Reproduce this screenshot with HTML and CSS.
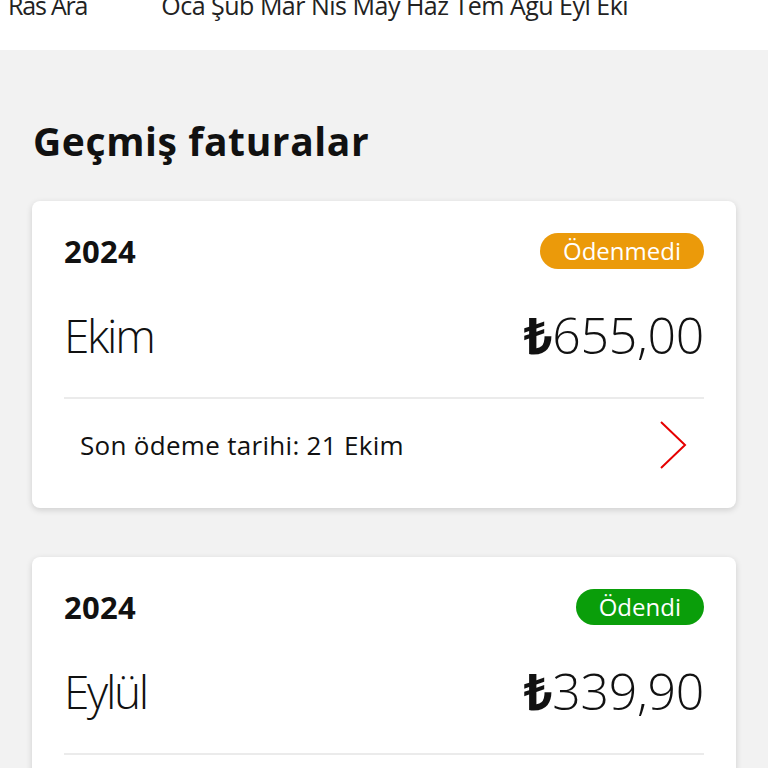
FILE: index.html
```html
<!DOCTYPE html>
<html lang="tr">
<head>
  <meta charset="UTF-8" />
  <meta name="viewport" content="width=device-width, initial-scale=1.0" />
  <title>Geçmiş faturalar</title>
  <link rel="stylesheet" href="styles.css">
</head>
<body>
  <div class="months">
    <span class="prev">Ras Ara</span>
    <span class="cur">Oca Şub Mar Nis May Haz Tem Ağu Eyl Eki</span>
  </div>

  <main class="history">
    <h1>Geçmiş faturalar</h1>

    <div class="bill">
      <div class="bill-top">
        <span class="year">2024</span>
        <span class="badge unpaid">Ödenmedi</span>
      </div>
      <div class="bill-mid">
        <span class="month">Ekim</span>
        <span class="amount"><b>₺</b>655,00</span>
      </div>
      <div class="bill-foot">
        <span>Son ödeme tarihi: 21 Ekim</span>
        <svg class="chev" width="30" height="50" viewBox="0 0 30 50">
          <path d="M3 2 L27 25 L3 48" fill="none" stroke="#e60000" stroke-width="2" />
        </svg>
      </div>
    </div>

    <div class="bill">
      <div class="bill-top">
        <span class="year">2024</span>
        <span class="badge paid">Ödendi</span>
      </div>
      <div class="bill-mid">
        <span class="month">Eylül</span>
        <span class="amount"><b>₺</b>339,90</span>
      </div>
      <div class="bill-foot">
        <span>Son ödeme tarihi: 21 Eylül</span>
        <svg class="chev" width="30" height="50" viewBox="0 0 30 50">
          <path d="M3 2 L27 25 L3 48" fill="none" stroke="#e60000" stroke-width="2" />
        </svg>
      </div>
    </div>
  </main>
</body>
</html>
```

FILE: styles.css
```css
body { margin: 0; font-family: "Open Sans", "Noto Sans", sans-serif; background: #f2f2f2; color: #111; overflow: hidden; }
.months { background: white; height: 50px; display: flex; align-items: flex-start; font-size: 25px; line-height: 20px; color: #222; padding-left: 8px; gap: 74px; overflow: hidden; letter-spacing: -0.5px; }
.months .prev { letter-spacing: -1.2px; }
.months span { display: block; margin-top: -5px; }
.history { padding: 65px 32px 0; }
h1 { margin: 0 0 34px; font-size: 39px; font-weight: 700; letter-spacing: 0.6px; line-height: 52px; padding-left: 1px; }
.bill { background: white; border-radius: 8px; box-shadow: 0 2px 6px rgba(0,0,0,0.15); padding: 32px 32px 0; margin-bottom: 49px; }
.bill-top { display: flex; justify-content: space-between; align-items: center; height: 36px; }
.year { font-size: 31px; font-weight: 700; letter-spacing: 0.3px; }
.badge { color: white; font-size: 24px; line-height: 36px; border-radius: 18px; padding: 0 23px; letter-spacing: 0; }
.unpaid { background: #eb9a0a; }
.paid { background: #0a9e0a; }
.bill-mid { display: flex; justify-content: space-between; align-items: center; height: 56px; margin-top: 38px; margin-bottom: 34px; }
.month { font-size: 46px; font-weight: 300; letter-spacing: -2.3px; }
.amount { font-size: 50px; font-weight: 300; letter-spacing: -0.3px; }
.amount b { font-weight: 700; }
.bill-foot { border-top: 2px solid #ebebeb; display: flex; justify-content: space-between; align-items: center; padding: 19px 16px 36px; height: 54px; }
.bill-foot span { font-size: 26px; letter-spacing: 0.3px; }
.chev { display: block; }
```
